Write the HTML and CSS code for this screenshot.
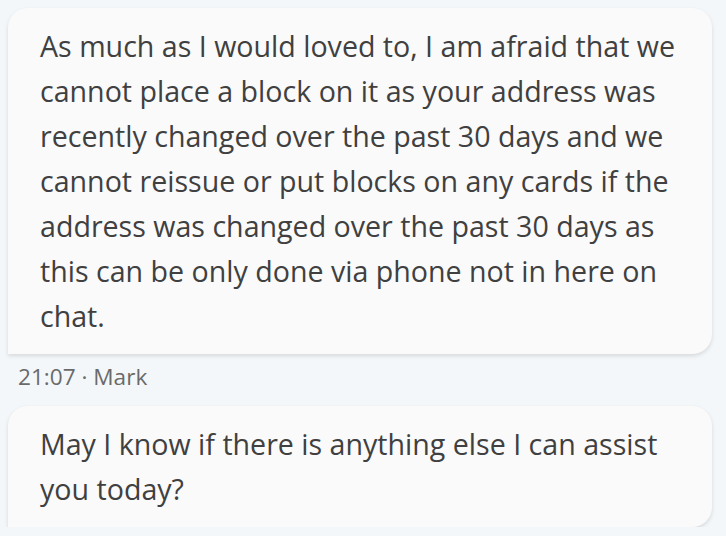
FILE: index.html
```
<!DOCTYPE html>
<html lang="en">
<head>
<meta charset="utf-8">
<title>Chat</title>
<link rel="stylesheet" href="styles.css">
</head>
<body>
<main class="chat">
  <div class="bubble">As much as I would loved to, I am afraid that we cannot place a block on it as your address was recently changed over the past 30 days and we cannot reissue or put blocks on any cards if the address was changed over the past 30 days as this can be only done via phone not in here on chat.</div>
  <div class="meta">21:07 · Mark</div>
  <div class="bubble">May I know if there is anything else I can assist you today?</div>
</main>
</body>
</html>
```
FILE: styles.css
```
html, body {
  margin: 0;
  padding: 0;
  background: #f4f7f9;
}
body {
  font-family: "Open Sans", "Noto Sans", sans-serif;
  color: #404040;
}
.chat {
  display: flex;
  flex-direction: column;
  padding: 8px 14px 0 8px;
}
.bubble {
  background: #fafafa;
  border-radius: 20px 20px 20px 0;
  box-shadow: 0 2px 4px rgba(0, 0, 0, 0.12);
  padding: 15px 32px 16px 32px;
  font-size: 28.6px;
  line-height: 45px;
}
.meta {
  font-size: 22.6px;
  line-height: 30px;
  color: #6a6a6a;
  margin: 8px 0 14px 10px;
}
```
